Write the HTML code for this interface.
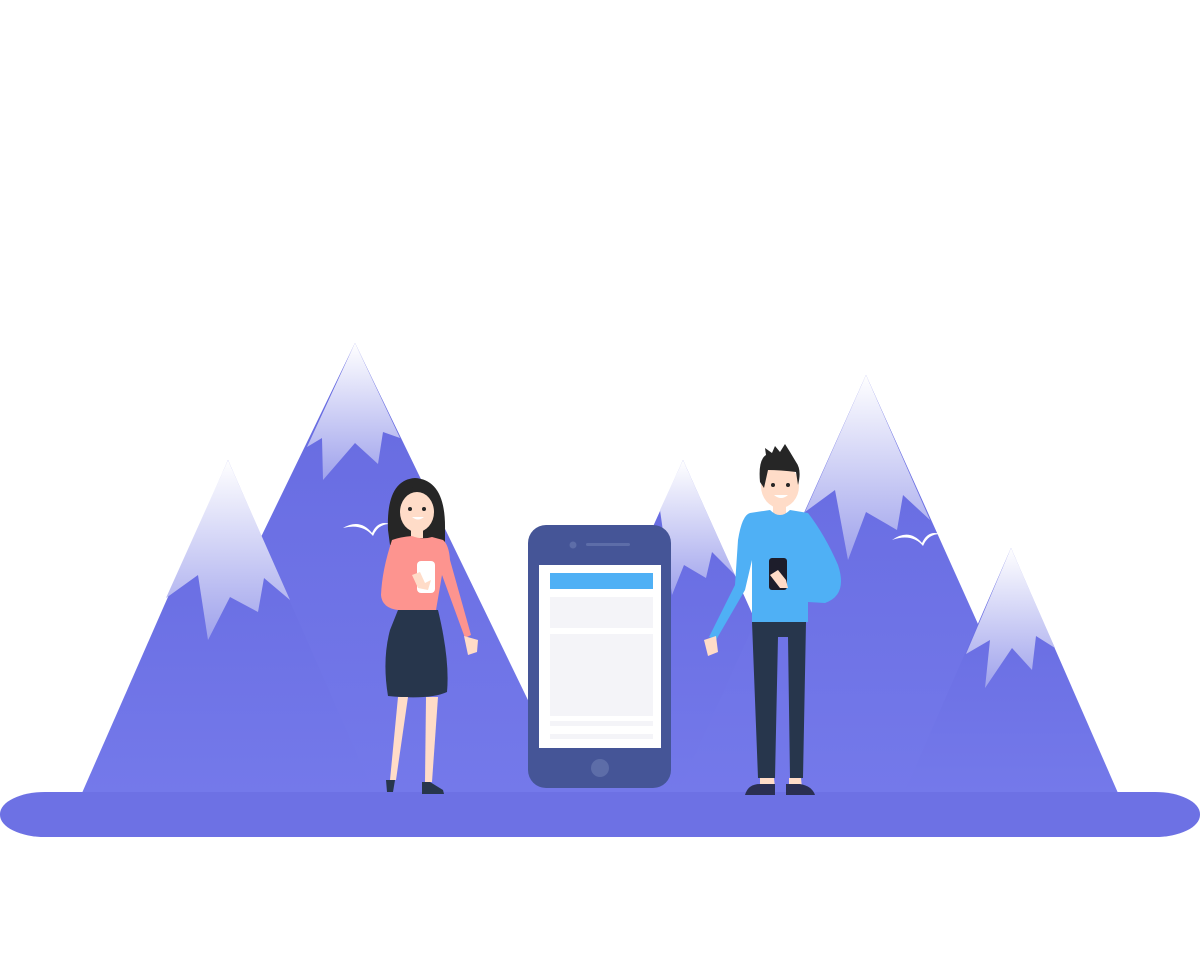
<!DOCTYPE html>
<html><head><style>html,body{margin:0;padding:0;background:#fff;width:1200px;height:960px;overflow:hidden}</style></head>
<body>
<svg width="1200" height="960" viewBox="0 0 1200 960" xmlns="http://www.w3.org/2000/svg">
<defs>
<linearGradient id="m" x1="0" y1="0" x2="0" y2="1"><stop offset="0" stop-color="#666ae0"/><stop offset="1" stop-color="#7479ea"/></linearGradient>
<linearGradient id="s" x1="0" y1="0" x2="0" y2="1"><stop offset="0" stop-color="#ffffff"/><stop offset="1" stop-color="#9fa2ec"/></linearGradient>
</defs>
<polygon points="355,343 573,793 137,793" fill="url(#m)"/>
<polygon points="355,343 400,438 383,432 378,464 355,443 323,480 322,438 307,447" fill="url(#s)"/>
<polygon points="228,460 374,793 82,793" fill="url(#m)"/>
<polygon points="228,460 290,600 264,578 258,612 230,597 208,640 198,575 166,598" fill="url(#s)"/>
<polygon points="683,460 833,793 533,793" fill="url(#m)"/>
<polygon points="683,460 735,575 712,552 706,578 684,565 672,595 660,510" fill="url(#s)"/>
<polygon points="866,375 1054,793 678,793" fill="url(#m)"/>
<polygon points="866,375 930,520 903,495 897,530 866,512 848,560 835,490 805,512" fill="url(#s)"/>
<polygon points="1011,548 1118,793 904,793" fill="url(#m)"/>
<polygon points="1011,548 1055,648 1036,636 1032,670 1012,648 985,688 990,640 966,654" fill="url(#s)"/>
<rect x="0" y="792" width="1200" height="45" rx="45" ry="22" fill="#6d71e4"/>
<path d="M343,528 Q360,518 372,533 Q378,520 390,524 Q378,524 373,536 Q362,523 343,528Z" fill="#fff"/>
<path d="M892,540 Q909,528 922,543 Q928,530 940,534 Q928,534 923,546 Q912,533 892,540Z" fill="#fff"/>
<rect x="528" y="525" width="143" height="263" rx="18" fill="#455597"/>
<rect x="539" y="565" width="122" height="183" fill="#fff"/>
<rect x="550" y="573" width="103" height="16" fill="#4fb0f5"/>
<rect x="550" y="597" width="103" height="31" fill="#f4f4f8"/>
<rect x="550" y="634" width="103" height="82" fill="#f4f4f8"/>
<rect x="550" y="721" width="103" height="5" fill="#f4f4f8"/>
<rect x="550" y="734" width="103" height="5" fill="#f4f4f8"/>
<circle cx="573" cy="545" r="3.5" fill="#5d6da8"/>
<rect x="586" y="543" width="44" height="3" rx="1.5" fill="#5d6da8"/>
<circle cx="600" cy="768" r="9" fill="#5d6da8"/>
<!-- woman -->
<path d="M388,530 Q386,480 415,478 Q446,480 445,530 L445,545 L390,545Z" fill="#262626"/>
<rect x="411" y="518" width="12" height="20" fill="#ffdcc8"/>
<ellipse cx="417" cy="512" rx="17" ry="20" fill="#ffdcc8"/>
<path d="M397,505 Q404,486 418,487 Q430,497 440,503 Q438,482 418,480 Q396,484 397,505Z" fill="#262626"/>
<circle cx="410" cy="509" r="2" fill="#262626"/><circle cx="424" cy="509" r="2" fill="#262626"/>
<path d="M412,517 Q418,522 424,517Z" fill="#fff"/>
<path d="M392,540 Q400,537 412,536 Q422,540 432,537 L443,540 Q449,545 450,560 L471,635 L465,638 L442,575 L436,610 L398,610 Q382,608 381,595 Q382,570 392,540Z" fill="#fd948f"/>
<rect x="417" y="561" width="18" height="32" rx="4" fill="#fff"/>
<path d="M412,575 L418,588 L428,590 L431,580 L425,583 L420,572Z" fill="#ffdcc8"/>
<path d="M398,610 L438,610 Q450,660 447,692 Q430,700 388,696 Q382,660 390,630Z" fill="#27364c"/>
<path d="M398,697 L408,697 L396,780 L390,780Z" fill="#ffdcc8"/>
<path d="M426,697 L438,697 L432,782 L425,782Z" fill="#ffdcc8"/>
<path d="M386,780 L395,780 L393,792 L387,792Z" fill="#27364c"/>
<path d="M422,782 L430,782 L443,790 L444,794 L422,794Z" fill="#27364c"/>
<path d="M464,636 L478,640 L477,652 L468,655Z" fill="#ffdcc8"/>
<!-- man -->
<rect x="773" y="500" width="13" height="22" fill="#ffdcc8"/>
<ellipse cx="780" cy="486" rx="19" ry="22" fill="#ffdcc8"/>
<path d="M760,482 Q758,460 766,455 L765,448 L772,453 L775,446 L780,452 L785,444 L790,452 L796,462 Q802,470 798,485 L796,472 Q780,470 768,470 L764,488Z" fill="#262626"/>
<circle cx="773" cy="485" r="2" fill="#262626"/><circle cx="788" cy="485" r="2" fill="#262626"/>
<path d="M774,495 Q781,501 788,495Z" fill="#fff"/>
<path d="M750,513 L770,510 Q780,520 790,510 L808,513 Q825,535 838,565 Q848,595 825,603 L808,602 L808,622 L752,622 L752,560 L745,590 L716,640 L709,637 L735,585 L738,540 Q742,515 750,513Z" fill="#4fb0f5"/>
<rect x="769" y="558" width="18" height="32" rx="3" fill="#1d1d2b"/>
<path d="M770,575 L778,570 L786,580 L788,588 L780,588Z" fill="#ffdcc8"/>
<path d="M752,622 L806,622 L803,778 L790,778 L788,637 L778,637 L775,778 L758,778Z" fill="#27364c"/>
<path d="M760,778 L774,778 L775,788 L760,788Z" fill="#ffdcc8"/>
<path d="M789,778 L801,778 L802,788 L789,788Z" fill="#ffdcc8"/>
<path d="M745,795 Q748,784 760,784 L775,784 L775,795Z" fill="#2a2f52"/>
<path d="M786,795 L786,784 L800,784 Q812,786 815,795Z" fill="#2a2f52"/>
<path d="M704,640 L716,636 L718,652 L708,656Z" fill="#ffdcc8"/>
</svg>
</body></html>
